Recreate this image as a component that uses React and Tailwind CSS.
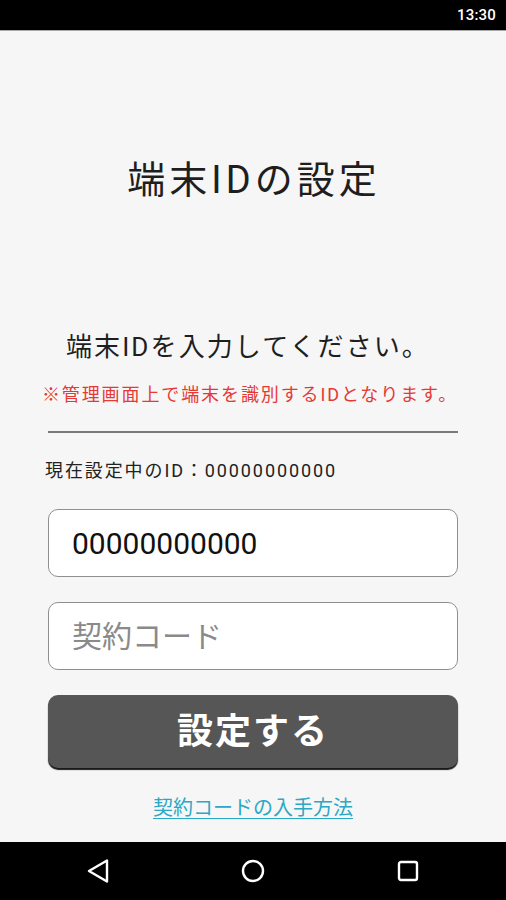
import React from "react";

const FONT = { fontFamily: 'Roboto, "Noto Sans CJK JP", sans-serif' };

export default function App() {
  return (
    <div className="w-[506px] h-[900px] flex flex-col overflow-hidden" style={FONT}>
      {/* status bar */}
      <div className="h-[30px] bg-black flex items-center justify-end pr-[10px] shrink-0">
        <span className="text-white text-[15px] font-medium tracking-[0.2px]">13:30</span>
      </div>
      <div className="h-[1px] bg-[#a8a8a8] shrink-0" />

      {/* main */}
      <div className="flex-1 bg-[#f6f6f6] flex flex-col">
        <div className="mt-[124px] h-[50px] flex items-center justify-center text-[38px] tracking-[4px] text-[#1e1e1e] pl-[2px]">
          端末IDの設定
        </div>

        <div className="mt-[124px] h-[36px] flex items-center justify-center text-[26px] tracking-[2.1px] text-[#1e1e1e] pr-[10px]">
          端末IDを入力してください。
        </div>

        <div className="mt-[16px] h-[26px] flex items-center justify-center text-[18px] tracking-[1.9px] text-[#e53935] pr-[6px]">
          ※管理画面上で端末を識別するIDとなります。
        </div>

        <div className="mt-[24px] mx-[48px] h-[2px] bg-[#7a7a7a]" />

        <div className="mt-[25px] h-[24px] flex items-center pl-[45px] text-[18px] tracking-[1.9px] text-[#222]">
          現在設定中のID：00000000000
        </div>

        <div className="mt-[27px] mx-[48px] h-[68px] bg-white border-[1.5px] border-[#8f8f8f] rounded-[10px] flex items-center pl-[23px] text-[30px] text-[#111]">
          00000000000
        </div>

        <div className="mt-[25px] mx-[48px] h-[68px] bg-white border-[1.5px] border-[#8f8f8f] rounded-[10px] flex items-center pl-[23px] text-[30px] text-[#8a8a8a]">
          契約コード
        </div>

        <div className="mt-[25px] mx-[48px] h-[73px] bg-[#565656] rounded-[10px] shadow-[0_2px_1px_#1a1a1a] flex items-center justify-center text-white text-[36px] font-bold tracking-[2px]">
          設定する
        </div>

        <div className="mt-[27px] h-[26px] flex items-center justify-center">
          <span className="text-[20px] text-[#2aa8c6] underline underline-offset-[3px] decoration-1">
            契約コードの入手方法
          </span>
        </div>
      </div>

      {/* nav bar */}
      <div className="h-[58px] bg-black flex items-center justify-center gap-[131px] shrink-0">
        <svg width="24" height="24" viewBox="0 0 24 24" fill="none" stroke="white" strokeWidth="2.4" strokeLinejoin="round">
          <path d="M3 12 L21 1.5 L21 22.5 Z" />
        </svg>
        <svg width="24" height="24" viewBox="0 0 24 24" fill="none" stroke="white" strokeWidth="2.4">
          <circle cx="12" cy="12" r="10" />
        </svg>
        <svg width="24" height="24" viewBox="0 0 24 24" fill="none" stroke="white" strokeWidth="2.4">
          <rect x="3" y="3" width="18" height="18" rx="2" />
        </svg>
      </div>
    </div>
  );
}
